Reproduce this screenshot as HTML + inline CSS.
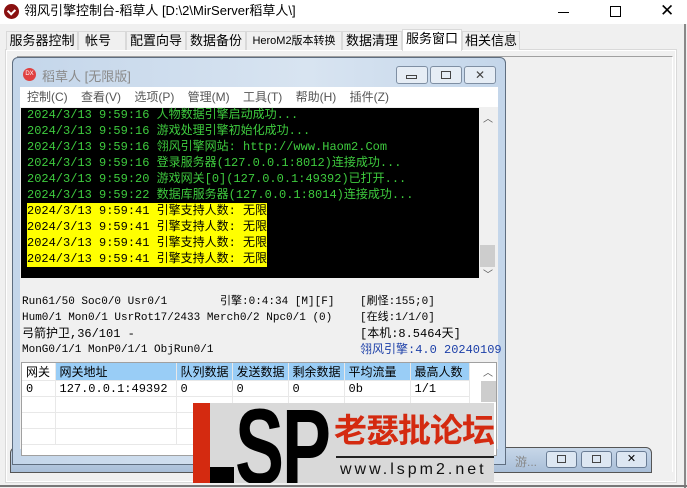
<!DOCTYPE html>
<html><head><meta charset="utf-8"><style>
*{margin:0;padding:0;box-sizing:border-box}
body{width:687px;height:488px;overflow:hidden;background:#f0f0f0;font-family:"Liberation Sans","Noto Sans CJK SC",sans-serif;font-size:12px;color:#000;position:relative}
.a{position:absolute}
.mono{font-family:"Liberation Mono","Noto Sans CJK SC",monospace}
.tab{position:absolute;top:31px;height:19px;border:1px solid #d9d9d9;border-bottom:none;background:#f0f0f0;font-size:13px;line-height:18px;text-align:center;color:#000}
.con div{height:16px;line-height:16px;white-space:pre;font-size:12px;color:#3ecb3e}
.con .y{background:#ffff00;color:#000;display:inline-block}
.st{font-size:11px;line-height:16px;white-space:pre}
.tb td{border-right:1px solid #e8e8e8;border-bottom:1px solid #e8e8e8;height:16px;font-size:12px;padding-left:4px}
</style></head><body>
<div class="a" style="left:0;top:0;width:687px;height:24px;background:#fff"></div>
<div class="a" style="left:4px;top:4px;width:15px;height:15px;border-radius:50%;background:#8a1010"></div>
<div class="a" style="left:8px;top:8px;width:7px;height:6px;border-left:2px solid #fff;border-bottom:2px solid #fff;transform:rotate(-45deg)"></div>
<div class="a" style="left:24px;top:3px;font-size:13px;line-height:16px">翎风引擎控制台-稻草人 [D:\2\MirServer稻草人\]</div>
<div class="a" style="left:558px;top:12px;width:11px;height:1px;background:#000"></div>
<div class="a" style="left:610px;top:6px;width:11px;height:11px;border:1px solid #000"></div>
<div class="a" style="left:660px;top:1px;font-size:17px">✕</div>
<div class="a" style="left:684px;top:24px;width:2px;height:464px;background:#888"></div>
<div class="a" style="left:0;top:485px;width:687px;height:2px;background:#777"></div>
<div class="a" style="left:5px;top:49px;width:672px;height:434px;border:1px solid #d9d9d9;background:#fff"></div>
<div class="a" style="left:7px;top:51px;width:668px;height:430px;background:#f0f0f0"></div>
<div class="a" style="left:17px;top:56px;width:656px;height:416px;border-top:1px solid #a0a0a0;border-right:1px solid #fff;border-left:1px solid #a0a0a0"></div>
<div class="tab" style="left:6px;width:72px">服务器控制</div>
<div class="tab" style="left:78px;width:48px;text-align:left;padding-left:6px">帐号</div>
<div class="tab" style="left:126px;width:60px">配置向导</div>
<div class="tab" style="left:186px;width:60px">数据备份</div>
<div class="tab" style="left:246px;width:96px;font-size:11px">HeroM2版本转换</div>
<div class="tab" style="left:342px;width:60px">数据清理</div>
<div class="tab" style="left:402px;top:29px;height:22px;width:60px;background:#fff;z-index:2">服务窗口</div>
<div class="tab" style="left:462px;width:58px">相关信息</div>
<div class="a" style="left:10px;top:447px;width:642px;height:26px;background:linear-gradient(#c7d7e8,#a9bfd8);border:1px solid #555;border-radius:6px 6px 0 0"></div>
<div class="a" style="left:515px;top:453px;font-size:12px;color:#888">游...</div>
<div class="a" style="left:546px;top:451px;width:31px;height:17px;border:1px solid #6a7d95;border-radius:3px;background:#dde7f2"></div>
<div class="a" style="left:557px;top:455px;width:9px;height:8px;border:1px solid #444"></div>
<div class="a" style="left:581px;top:451px;width:31px;height:17px;border:1px solid #6a7d95;border-radius:3px;background:#dde7f2"></div>
<div class="a" style="left:592px;top:455px;width:9px;height:8px;border:1px solid #444"></div>
<div class="a" style="left:616px;top:451px;width:31px;height:17px;border:1px solid #6a7d95;border-radius:3px;background:#dde7f2;text-align:center;font-size:11px;line-height:15px">✕</div>
<div class="a" style="left:12px;top:57px;width:494px;height:408px;background:linear-gradient(90deg,#c4d6ea,#d8e4f1 60%,#c4d6ea);border:1px solid #5f6e80;border-radius:6px 6px 0 0"></div>
<div class="a" style="left:23px;top:68px;width:13px;height:13px;border-radius:50%;background:#e04040;color:#fff;font-size:6px;line-height:13px;text-align:center">DX</div>
<div class="a" style="left:42px;top:66px;font-size:13px;color:#8a8a8a">稻草人 [无限版]</div>
<div class="a" style="left:396px;top:66px;width:32px;height:18px;border:1px solid #7f8fa3;border-radius:3px;background:#e6edf5"></div>
<div class="a" style="left:406px;top:75px;width:11px;height:4px;border:1px solid #444"></div>
<div class="a" style="left:430px;top:66px;width:32px;height:18px;border:1px solid #7f8fa3;border-radius:3px;background:#e6edf5"></div>
<div class="a" style="left:441px;top:71px;width:10px;height:8px;border:1px solid #444"></div>
<div class="a" style="left:464px;top:66px;width:32px;height:18px;border:1px solid #7f8fa3;border-radius:3px;background:#e6edf5;text-align:center;font-size:12px;line-height:16px;color:#444">✕</div>
<div class="a" style="left:20px;top:87px;width:478px;height:20px;background:#fff"></div>
<div class="a" style="left:27px;top:88px;font-size:12px;color:#555;white-space:pre;line-height:18px">控制(C)    查看(V)    选项(P)    管理(M)    工具(T)    帮助(H)    插件(Z)</div>
<div class="a" style="left:20px;top:107px;width:478px;height:342px;background:#f0f0f0"></div>
<div class="a" style="left:21px;top:108px;width:458px;height:170px;background:#000"></div>
<div class="a con mono" style="left:27px;top:107px">
<div>2024/3/13 9:59:16 人物数据引擎启动成功...</div>
<div>2024/3/13 9:59:16 游戏处理引擎初始化成功...</div>
<div>2024/3/13 9:59:16 翎风引擎网站: http://www.Haom2.Com</div>
<div>2024/3/13 9:59:16 登录服务器(127.0.0.1:8012)连接成功...</div>
<div>2024/3/13 9:59:20 游戏网关[0](127.0.0.1:49392)已打开...</div>
<div>2024/3/13 9:59:22 数据库服务器(127.0.0.1:8014)连接成功...</div>
<div><span class="y">2024/3/13 9:59:41 引擎支持人数: 无限</span></div>
<div><span class="y">2024/3/13 9:59:41 引擎支持人数: 无限</span></div>
<div><span class="y">2024/3/13 9:59:41 引擎支持人数: 无限</span></div>
<div><span class="y">2024/3/13 9:59:41 引擎支持人数: 无限</span></div>
</div>
<div class="a" style="left:479px;top:108px;width:17px;height:170px;background:#f0f0f0"></div>
<div class="a" style="left:483px;top:110px;font-size:10px;color:#555">︿</div>
<div class="a" style="left:480px;top:245px;width:15px;height:22px;background:#cdcdcd"></div>
<div class="a" style="left:483px;top:266px;font-size:10px;color:#555">﹀</div>
<div class="a st mono" style="left:22px;top:294px">Run61/50 Soc0/0 Usr0/1</div>
<div class="a st mono" style="left:220px;top:294px">引擎:0:4:34 [M][F]</div>
<div class="a st mono" style="left:360px;top:294px">[刷怪:155;0]</div>
<div class="a st mono" style="left:22px;top:310px">Hum0/1 Mon0/1 UsrRot17/2433 Merch0/2 Npc0/1 (0)</div>
<div class="a st mono" style="left:360px;top:310px">[在线:1/1/0]</div>
<div class="a st mono" style="left:22px;top:326px;font-size:12px">弓箭护卫,36/101 -</div>
<div class="a st mono" style="left:360px;top:326px;font-size:12px">[本机:8.5464天]</div>
<div class="a st mono" style="left:22px;top:342px">MonG0/1/1 MonP0/1/1 ObjRun0/1</div>
<div class="a st mono" style="left:360px;top:342px;color:#1c3fa8;font-size:12px">翎风引擎:4.0 20240109</div>
<div class="a" style="left:21px;top:362px;width:476px;height:94px;background:#fff;border:1px solid #a0a0a0"></div>
<table class="a tb" style="left:22px;top:363px;border-collapse:collapse;width:448px">
<tr style="background:#99cdf6;font-size:13px"><td style="width:33px;background:#fff">网关</td><td style="width:121px">网关地址</td><td style="width:56px">队列数据</td><td style="width:56px">发送数据</td><td style="width:56px">剩余数据</td><td style="width:66px">平均流量</td><td>最高人数</td></tr>
<tr class="mono"><td>0</td><td>127.0.0.1:49392</td><td>0</td><td>0</td><td>0</td><td>0b</td><td>1/1</td></tr>
<tr><td></td><td></td><td></td><td></td><td></td><td></td><td></td></tr>
<tr><td></td><td></td><td></td><td></td><td></td><td></td><td></td></tr>
<tr><td></td><td></td><td></td><td></td><td></td><td></td><td></td></tr>
</table>
<div class="a" style="left:481px;top:381px;width:15px;height:21px;background:#cdcdcd"></div>
<div class="a" style="left:483px;top:364px;font-size:10px;color:#555">︿</div>
<div class="a" style="left:193px;top:403px;width:301px;height:80px;background:#d9d9d9;overflow:hidden">
  <div class="a" style="left:0;top:0;width:17px;height:80px;background:#d42a10"></div>
  <div class="a" style="left:17px;top:64px;width:24px;height:16px;background:#000"></div>
  <div class="a" style="left:42px;top:-10px;font-family:'Liberation Sans';font-weight:bold;font-size:108px;line-height:108px;color:#000;transform:scaleX(0.68);transform-origin:left;letter-spacing:-3px;white-space:nowrap">SP</div>
  <div class="a" style="left:141px;top:1px;font-size:33px;font-weight:bold;color:#d42a10;line-height:48px;letter-spacing:-1px;font-family:'Noto Sans CJK SC',sans-serif;white-space:nowrap">老瑟批论坛</div>
  <div class="a" style="left:143px;top:53px;width:158px;height:2px;background:#222"></div>
  <div class="a" style="left:147px;top:58px;font-size:16px;letter-spacing:3px;color:#111;white-space:nowrap">www.lspm2.net</div>
</div>
</body></html>
